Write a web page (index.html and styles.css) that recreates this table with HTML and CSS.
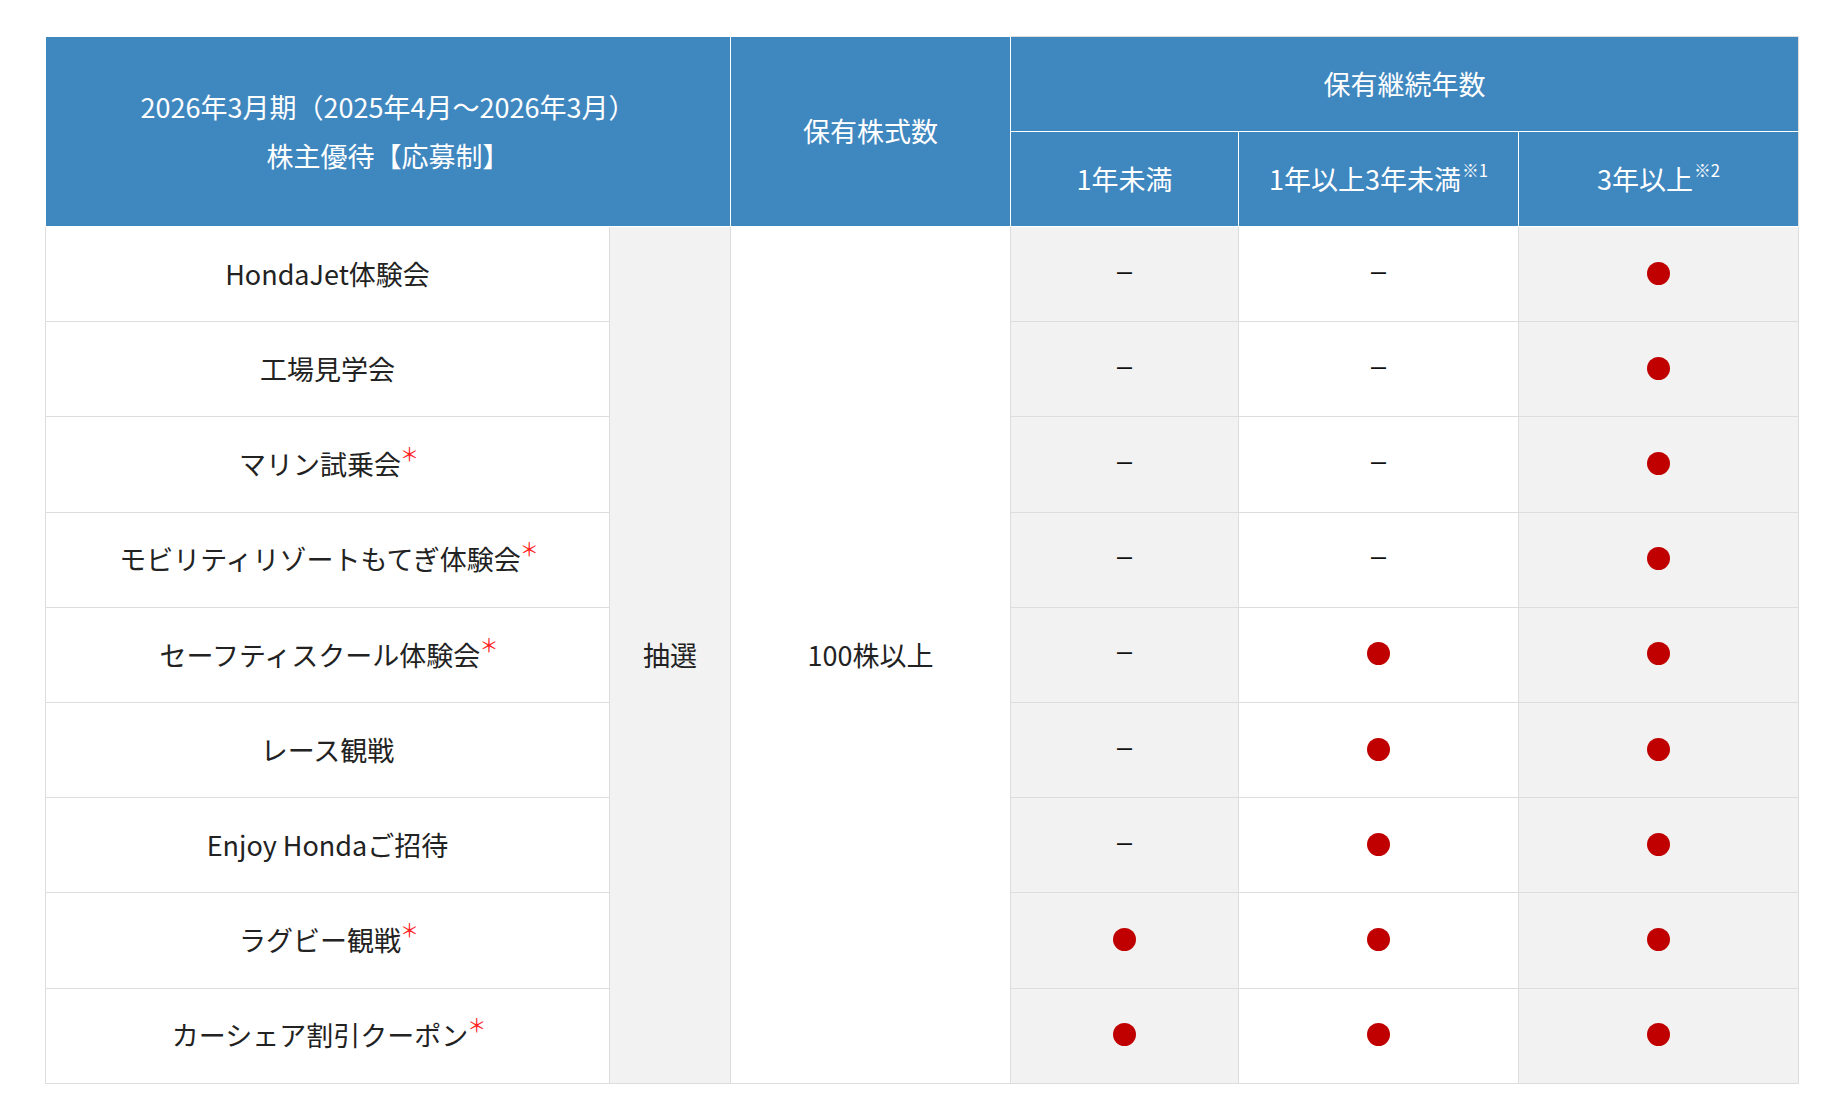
FILE: index.html
```html
<!DOCTYPE html>
<html lang="ja">
<head>
<meta charset="utf-8">
<title>株主優待</title>
<link rel="stylesheet" href="styles.css">
</head>
<body>
<div class="wrap">
<table class="benefits">
  <colgroup>
    <col class="c-item"><col class="c-method"><col class="c-shares"><col class="c-y1"><col class="c-y2"><col class="c-y3">
  </colgroup>
  <thead>
    <tr class="hr1">
      <th colspan="2" rowspan="2">2026年3月期（2025年4月〜2026年3月）<br>株主優待【応募制】</th>
      <th rowspan="2">保有株式数</th>
      <th colspan="3" class="th-years">保有継続年数</th>
    </tr>
    <tr class="hr2">
      <th>1年未満</th>
      <th>1年以上3年未満<sup>※1</sup></th>
      <th class="th-last">3年以上<sup>※2</sup></th>
    </tr>
  </thead>
  <tbody>
    <tr>
      <td class="item">HondaJet体験会</td>
      <td class="gray" rowspan="9">抽選</td>
      <td rowspan="9">100株以上</td>
      <td class="gray"><div class="mark"><span class="dash">–</span></div></td>
      <td><div class="mark"><span class="dash">–</span></div></td>
      <td class="gray"><div class="mark"><span class="dot"></span></div></td>
    </tr>
    <tr>
      <td class="item">工場見学会</td>
      <td class="gray"><div class="mark"><span class="dash">–</span></div></td>
      <td><div class="mark"><span class="dash">–</span></div></td>
      <td class="gray"><div class="mark"><span class="dot"></span></div></td>
    </tr>
    <tr>
      <td class="item">マリン試乗会<span class="ast">＊</span></td>
      <td class="gray"><div class="mark"><span class="dash">–</span></div></td>
      <td><div class="mark"><span class="dash">–</span></div></td>
      <td class="gray"><div class="mark"><span class="dot"></span></div></td>
    </tr>
    <tr>
      <td class="item">モビリティリゾートもてぎ体験会<span class="ast">＊</span></td>
      <td class="gray"><div class="mark"><span class="dash">–</span></div></td>
      <td><div class="mark"><span class="dash">–</span></div></td>
      <td class="gray"><div class="mark"><span class="dot"></span></div></td>
    </tr>
    <tr>
      <td class="item">セーフティスクール体験会<span class="ast">＊</span></td>
      <td class="gray"><div class="mark"><span class="dash">–</span></div></td>
      <td><div class="mark"><span class="dot"></span></div></td>
      <td class="gray"><div class="mark"><span class="dot"></span></div></td>
    </tr>
    <tr>
      <td class="item">レース観戦</td>
      <td class="gray"><div class="mark"><span class="dash">–</span></div></td>
      <td><div class="mark"><span class="dot"></span></div></td>
      <td class="gray"><div class="mark"><span class="dot"></span></div></td>
    </tr>
    <tr>
      <td class="item">Enjoy Hondaご招待</td>
      <td class="gray"><div class="mark"><span class="dash">–</span></div></td>
      <td><div class="mark"><span class="dot"></span></div></td>
      <td class="gray"><div class="mark"><span class="dot"></span></div></td>
    </tr>
    <tr>
      <td class="item">ラグビー観戦<span class="ast">＊</span></td>
      <td class="gray"><div class="mark"><span class="dot"></span></div></td>
      <td><div class="mark"><span class="dot"></span></div></td>
      <td class="gray"><div class="mark"><span class="dot"></span></div></td>
    </tr>
    <tr>
      <td class="item">カーシェア割引クーポン<span class="ast">＊</span></td>
      <td class="gray"><div class="mark"><span class="dot"></span></div></td>
      <td><div class="mark"><span class="dot"></span></div></td>
      <td class="gray"><div class="mark"><span class="dot"></span></div></td>
    </tr>
  </tbody>
</table>
</div>
</body>
</html>
```
FILE: styles.css
```css
html, body {
  margin: 0;
  padding: 0;
  background: #fff;
}
body {
  font-family: "Noto Sans CJK JP", "Noto Sans", sans-serif;
  color: #222;
}
.wrap {
  padding: 36px 40px 0 45px;
}
.benefits {
  border-collapse: collapse;
  table-layout: fixed;
  width: 1753px;
  font-size: 27px;
  line-height: 1.8;
}
.c-item { width: 564px; }
.c-method { width: 121px; }
.c-shares { width: 280px; }
.c-y1 { width: 228px; }
.c-y2 { width: 280px; }
.c-y3 { width: 280px; }

.benefits th {
  background: #3f87bf;
  color: #fff;
  font-weight: 400;
  text-align: center;
  vertical-align: middle;
  border: 1px solid #fff;
  padding: 0;
}
.benefits thead tr:first-child th {
  border-top-color: #fff;
}
.benefits thead tr:first-child th.th-years {
  border-top-color: #ddd;
  border-right-color: #ddd;
}
.benefits th.th-last {
  border-right-color: #ddd;
}
.hr1 { height: 95px; }
.hr2 { height: 95px; }
.benefits sup {
  font-size: 0.62em;
  line-height: 0;
  vertical-align: 0;
  position: relative;
  top: -0.75em;
  margin-left: 1px;
}
.benefits td {
  border: 1px solid #ddd;
  text-align: center;
  vertical-align: middle;
  padding: 0;
  background: #fff;
}
.benefits tbody tr { height: 95.2px; }
.benefits td.gray { background: #f2f2f2; }
.ast {
  display: inline-block;
  color: #f22;
  font-size: 19px;
  line-height: 1;
  vertical-align: top;
  position: relative;
  top: 4px;
  margin-left: -1px;
  margin-right: -3px;
}
.mark {
  display: flex;
  justify-content: center;
  align-items: center;
  height: 48px;
}
.dash {
  display: block;
  font-family: "Liberation Sans", sans-serif;
  font-size: 27px;
  line-height: 1;
  color: #111;
  position: relative;
  top: -3px;
}
.dot {
  display: block;
  width: 23px;
  height: 23px;
  border-radius: 50%;
  background: #c00000;
  position: relative;
  top: -1px;
}
```
